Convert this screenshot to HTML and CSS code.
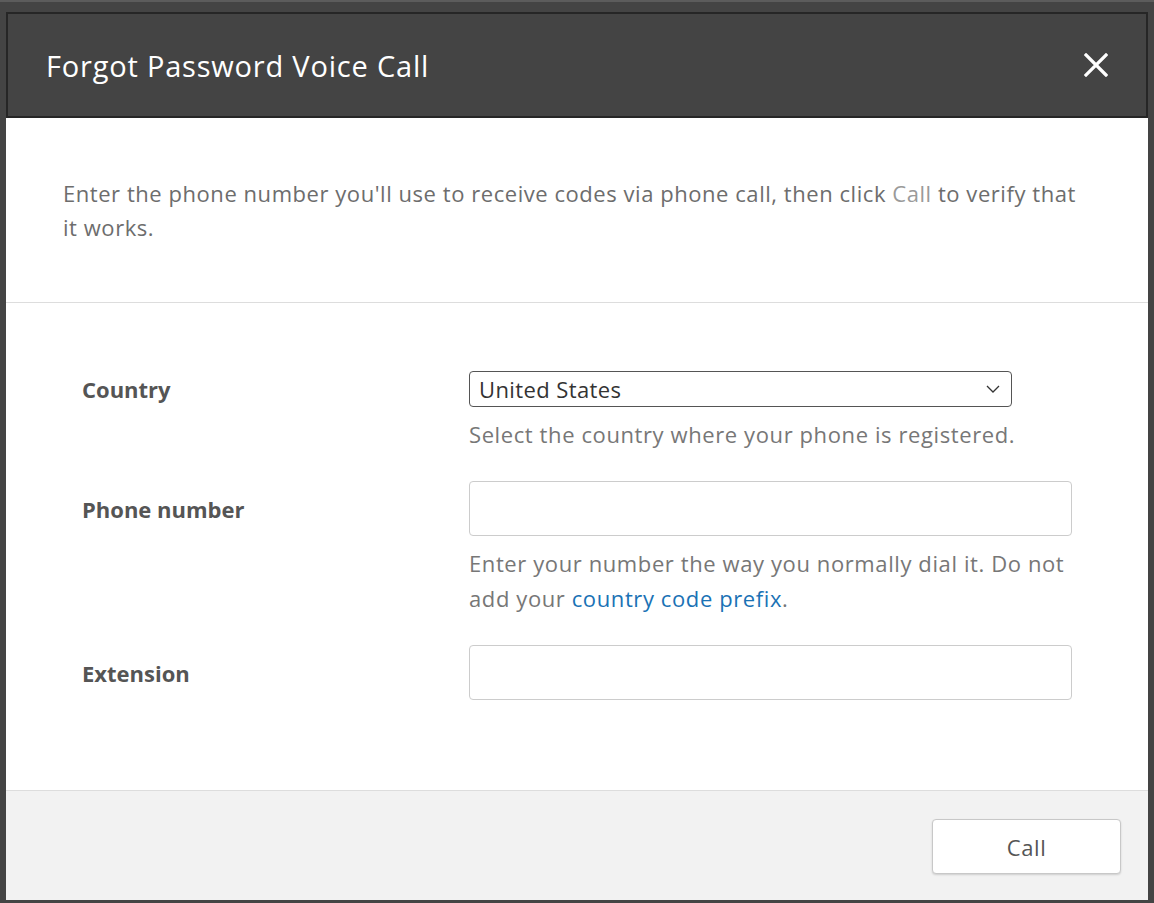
FILE: index.html
```html
<!DOCTYPE html>
<html lang="en">
<head>
<meta charset="utf-8">
<title>Forgot Password Voice Call</title>
<link rel="stylesheet" href="styles.css">
</head>
<body>
<div class="dialog">
  <div class="dialog-header">
    <h1 class="dialog-title">Forgot Password Voice Call</h1>
    <button class="close-btn" aria-label="Close">
      <svg width="24" height="24" viewBox="0 0 24 24"><path d="M2 2 L22 22 M22 2 L2 22" stroke="#fff" stroke-width="3.2" stroke-linecap="square" fill="none"/></svg>
    </button>
  </div>
  <div class="intro">
    <p>Enter the phone number you'll use to receive codes via phone call, then click <span class="muted">Call</span> to verify that it works.</p>
  </div>
  <form class="form">
    <div class="row">
      <label class="label">Country</label>
      <div class="control">
        <div class="select-wrap">
          <select class="select"><option>United States</option></select>
          <svg class="chevron" width="14" height="8" viewBox="0 0 14 8"><path d="M1 1 L7 7 L13 1" stroke="#333" stroke-width="1.3" fill="none"/></svg>
        </div>
      </div>
      <div class="help">Select the country where your phone is registered.</div>
    </div>
    <div class="row">
      <label class="label">Phone number</label>
      <div class="control"><input class="input" type="text"></div>
      <div class="help">Enter your number the way you normally dial it. Do not add your <a href="#" class="link">country code prefix</a>.</div>
    </div>
    <div class="row">
      <label class="label">Extension</label>
      <div class="control"><input class="input" type="text"></div>
    </div>
  </form>
  <div class="footer">
    <button class="call-btn" type="button">Call</button>
  </div>
</div>
</body>
</html>
```
FILE: styles.css
```css
html, body {
  margin: 0;
  padding: 0;
}
body {
  background: #444444;
  border-top: 2px solid #5c5c5c;
  font-family: "Open Sans", "Liberation Sans", sans-serif;
  height: 901px;
  overflow: hidden;
}
.dialog {
  margin: 10px 0 0 6px;
  width: 1142px;
  height: 888px;
  background: #ffffff;
  display: flex;
  flex-direction: column;
}
.dialog-header {
  height: 102px;
  background: #444444;
  border: 2px solid #262626;
  display: flex;
  align-items: center;
  justify-content: space-between;
  padding: 0 38px 0 38px;
}
.dialog-title {
  margin: 0;
  color: #ffffff;
  font-weight: 400;
  font-size: 29px;
  letter-spacing: 0.8px;
}
.close-btn {
  background: none;
  border: 0;
  padding: 0;
  width: 24px;
  height: 24px;
  display: flex;
  cursor: pointer;
}
.intro {
  padding: 58px 62px 58px 57px;
  border-bottom: 1px solid #dddddd;
}
.intro p {
  margin: 0;
  color: #6d6d6d;
  font-size: 22px;
  letter-spacing: 0.55px;
  line-height: 34px;
}
.muted {
  color: #9a9a9a;
}
.form {
  flex: 1;
  padding: 68px 76px 0 76px;
  display: flex;
  flex-direction: column;
  gap: 29px;
}
.row {
  display: grid;
  grid-template-columns: 387px 603px;
  row-gap: 10px;
  align-items: center;
}
.label {
  grid-column: 1;
  grid-row: 1;
  color: #555555;
  font-weight: 700;
  font-size: 22px;
}
.control {
  grid-column: 2;
  grid-row: 1;
}
.help {
  grid-column: 2;
  grid-row: 2;
  color: #777777;
  font-size: 22px;
  letter-spacing: 0.6px;
  line-height: 35px;
}
.link {
  color: #1a72b5;
  text-decoration: none;
}
.select-wrap {
  position: relative;
  width: 543px;
}
.select {
  appearance: none;
  -webkit-appearance: none;
  width: 543px;
  height: 36px;
  border: 1px solid #555555;
  border-radius: 4px;
  background: #ffffff;
  padding: 0 30px 0 9px;
  font-family: inherit;
  font-size: 22px;
  letter-spacing: 0.4px;
  color: #333333;
}
.chevron {
  position: absolute;
  right: 12px;
  top: 14px;
  pointer-events: none;
}
.input {
  box-sizing: border-box;
  width: 603px;
  height: 55px;
  border: 1px solid #cccccc;
  border-radius: 4px;
  background: #ffffff;
  font-family: inherit;
  font-size: 22px;
  padding: 0 12px;
}
.footer {
  height: 110px;
  background: #f2f2f2;
  border-top: 1px solid #dddddd;
  display: flex;
  justify-content: flex-end;
  align-items: flex-start;
  padding: 28px 27px 0 0;
  box-sizing: border-box;
}
.call-btn {
  width: 189px;
  height: 55px;
  background: #ffffff;
  border: 1px solid #c8c8c8;
  border-radius: 4px;
  box-shadow: 0 1px 2px rgba(0,0,0,0.15);
  font-family: inherit;
  font-size: 22px;
  letter-spacing: 0.6px;
  color: #555555;
}
```
